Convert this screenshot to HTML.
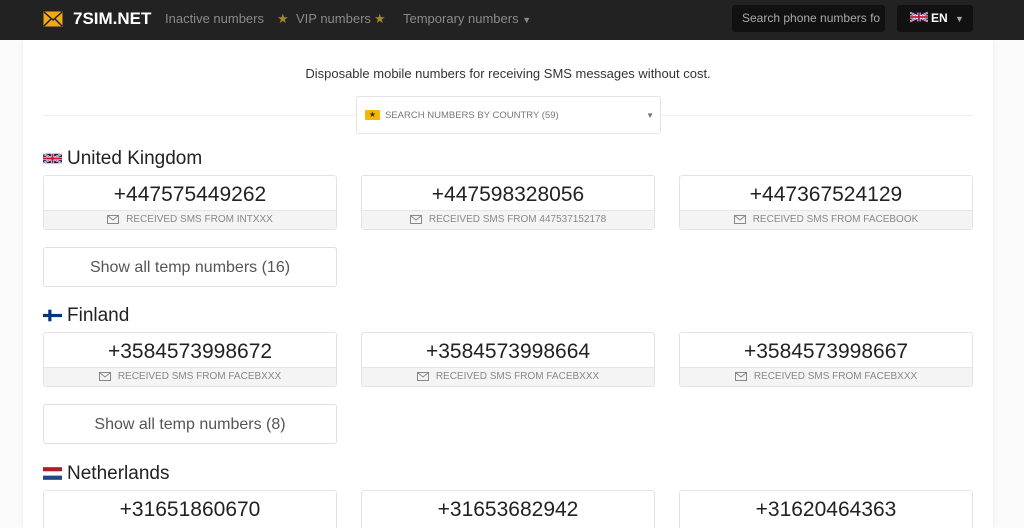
<!DOCTYPE html>
<html><head><meta charset="utf-8"><style>
*{box-sizing:border-box;margin:0;padding:0}
html,body{width:1024px;height:528px;overflow:hidden}
body{background:#fafafa;font-family:"Liberation Sans",Roboto,sans-serif;color:#222;position:relative}
.hdr{position:absolute;left:0;top:0;width:1024px;height:40px;background:#222;}
.hdr .t{position:absolute;top:0;line-height:38px;font-size:13px;color:#8a8a8a;white-space:nowrap}
.main{position:absolute;left:23px;top:40px;width:970px;height:488px;background:#fff;box-shadow:0 0 5px rgba(0,0,0,.06)}
.a{position:absolute}
.card{position:absolute;width:294px;height:55px;border:1px solid #e3e3e3;border-radius:3px;background:#fff;overflow:hidden}
.card .n{height:34px;text-align:center;font-size:21px;line-height:37px;color:#222}
.card .f{height:20px;background:#f4f4f4;border-top:1px solid #e6e6e6;text-align:center;font-size:10px;line-height:18px;color:#888}
.card .f svg{vertical-align:-2px;margin-right:7px}
.btn{position:absolute;left:43px;width:294px;height:40px;border:1px solid #e0e0e0;border-radius:3px;text-align:center;font-size:16px;line-height:40px;color:#555}
.ttl{position:absolute;left:43px;font-size:19px;color:#222}
.flag{display:inline-block;width:19px;height:13px;vertical-align:-1px;margin-right:5px}
</style></head><body>
<div class="main"></div>
<div class="hdr">
<svg class="a" style="left:43px;top:11px" width="20" height="16" viewBox="0 0 20 16"><rect x="1" y="1" width="18" height="14" fill="#f0a818" stroke="#f0a818"/><path d="M1 1 L10 9 L19 1 M1 15 L8 8 M19 15 L12 8" stroke="#222" stroke-width="1.5" fill="none"/></svg>
<div class="t" style="left:73px;color:#fff;font-size:17px;font-weight:bold">7SIM.NET</div>
<div class="t" style="left:165px">Inactive numbers</div>
<div class="t" style="left:277px;color:#a08830">★</div>
<div class="t" style="left:296px">VIP numbers</div>
<div class="t" style="left:374px;color:#a08830">★</div>
<div class="t" style="left:403px">Temporary numbers <span style="font-size:9px">▼</span></div>
<div class="a" style="left:732px;top:5px;width:153px;height:27px;background:#111;border-radius:3px;color:#aaa;font-size:12px;line-height:27px;padding-left:10px;overflow:hidden;white-space:nowrap">Search phone numbers fo</div>
<div class="a" style="left:897px;top:5px;width:76px;height:27px;background:#111;border-radius:3px;color:#fff;font-size:12px;font-weight:bold;line-height:27px;padding-left:13px"><svg class="flag" viewBox="0 0 60 30" style="width:18px;height:12px;margin-right:3px"><rect width="60" height="30" fill="#012169"/><path d="M0 0L60 30M60 0L0 30" stroke="#fff" stroke-width="6"/><path d="M0 0L60 30M60 0L0 30" stroke="#C8102E" stroke-width="2"/><path d="M30 0V30M0 15H60" stroke="#fff" stroke-width="10"/><path d="M30 0V30M0 15H60" stroke="#C8102E" stroke-width="6"/></svg>EN <span style="color:#aaa;font-size:9px;margin-left:4px">▼</span></div>
</div>
<div class="a" style="left:0;top:66px;width:1016px;text-align:center;font-size:13px;color:#333">Disposable mobile numbers for receiving SMS messages without cost.</div>
<div class="a" style="left:43px;top:115px;width:930px;height:1px;background:#eee"></div>
<div class="a" style="left:356px;top:96px;width:305px;height:38px;background:#fff;border:1px solid #e3e3e3;border-radius:3px;font-size:9.5px;color:#777;line-height:37px;padding-left:28px">SEARCH NUMBERS BY COUNTRY (59)<span style="position:absolute;left:8px;top:13px;width:15px;height:10px;background:#f5b800;border-radius:1px;font-size:8px;line-height:10px;text-align:center;color:#333">★</span><span style="position:absolute;right:6px;top:0;font-size:8px;color:#777">▼</span></div>

<div class="ttl" style="top:148px"><svg class="flag" viewBox="0 0 60 30"><rect width="60" height="30" fill="#012169"/><path d="M0 0L60 30M60 0L0 30" stroke="#fff" stroke-width="6"/><path d="M0 0L60 30M60 0L0 30" stroke="#C8102E" stroke-width="2"/><path d="M30 0V30M0 15H60" stroke="#fff" stroke-width="10"/><path d="M30 0V30M0 15H60" stroke="#C8102E" stroke-width="6"/></svg>United Kingdom</div>
<div class="card" style="left:43px;top:175px"><div class="n">+447575449262</div><div class="f"><svg width="12" height="9" viewBox="0 0 12 9"><rect x=".5" y=".5" width="11" height="8" fill="none" stroke="#888"/><path d="M.5 .5L6 5 11.5.5" fill="none" stroke="#888"/></svg>RECEIVED SMS FROM INTXXX</div></div>
<div class="card" style="left:361px;top:175px"><div class="n">+447598328056</div><div class="f"><svg width="12" height="9" viewBox="0 0 12 9"><rect x=".5" y=".5" width="11" height="8" fill="none" stroke="#888"/><path d="M.5 .5L6 5 11.5.5" fill="none" stroke="#888"/></svg>RECEIVED SMS FROM 447537152178</div></div>
<div class="card" style="left:679px;top:175px"><div class="n">+447367524129</div><div class="f"><svg width="12" height="9" viewBox="0 0 12 9"><rect x=".5" y=".5" width="11" height="8" fill="none" stroke="#888"/><path d="M.5 .5L6 5 11.5.5" fill="none" stroke="#888"/></svg>RECEIVED SMS FROM FACEBOOK</div></div>
<div class="btn" style="top:247px">Show all temp numbers (16)</div>

<div class="ttl" style="top:305px"><svg class="flag" viewBox="0 0 18 11"><rect width="18" height="11" fill="#fff"/><rect x="5" width="3" height="11" fill="#003580"/><rect y="4" width="18" height="3" fill="#003580"/></svg>Finland</div>
<div class="card" style="left:43px;top:332px"><div class="n">+3584573998672</div><div class="f"><svg width="12" height="9" viewBox="0 0 12 9"><rect x=".5" y=".5" width="11" height="8" fill="none" stroke="#888"/><path d="M.5 .5L6 5 11.5.5" fill="none" stroke="#888"/></svg>RECEIVED SMS FROM FACEBXXX</div></div>
<div class="card" style="left:361px;top:332px"><div class="n">+3584573998664</div><div class="f"><svg width="12" height="9" viewBox="0 0 12 9"><rect x=".5" y=".5" width="11" height="8" fill="none" stroke="#888"/><path d="M.5 .5L6 5 11.5.5" fill="none" stroke="#888"/></svg>RECEIVED SMS FROM FACEBXXX</div></div>
<div class="card" style="left:679px;top:332px"><div class="n">+3584573998667</div><div class="f"><svg width="12" height="9" viewBox="0 0 12 9"><rect x=".5" y=".5" width="11" height="8" fill="none" stroke="#888"/><path d="M.5 .5L6 5 11.5.5" fill="none" stroke="#888"/></svg>RECEIVED SMS FROM FACEBXXX</div></div>
<div class="btn" style="top:404px">Show all temp numbers (8)</div>

<div class="ttl" style="top:463px"><svg class="flag" viewBox="0 0 18 12"><rect width="18" height="4" fill="#ae1c28"/><rect y="4" width="18" height="4" fill="#fff"/><rect y="8" width="18" height="4" fill="#21468b"/></svg>Netherlands</div>
<div class="card" style="left:43px;top:490px"><div class="n">+31651860670</div></div>
<div class="card" style="left:361px;top:490px"><div class="n">+31653682942</div></div>
<div class="card" style="left:679px;top:490px"><div class="n">+31620464363</div></div>
</body></html>
